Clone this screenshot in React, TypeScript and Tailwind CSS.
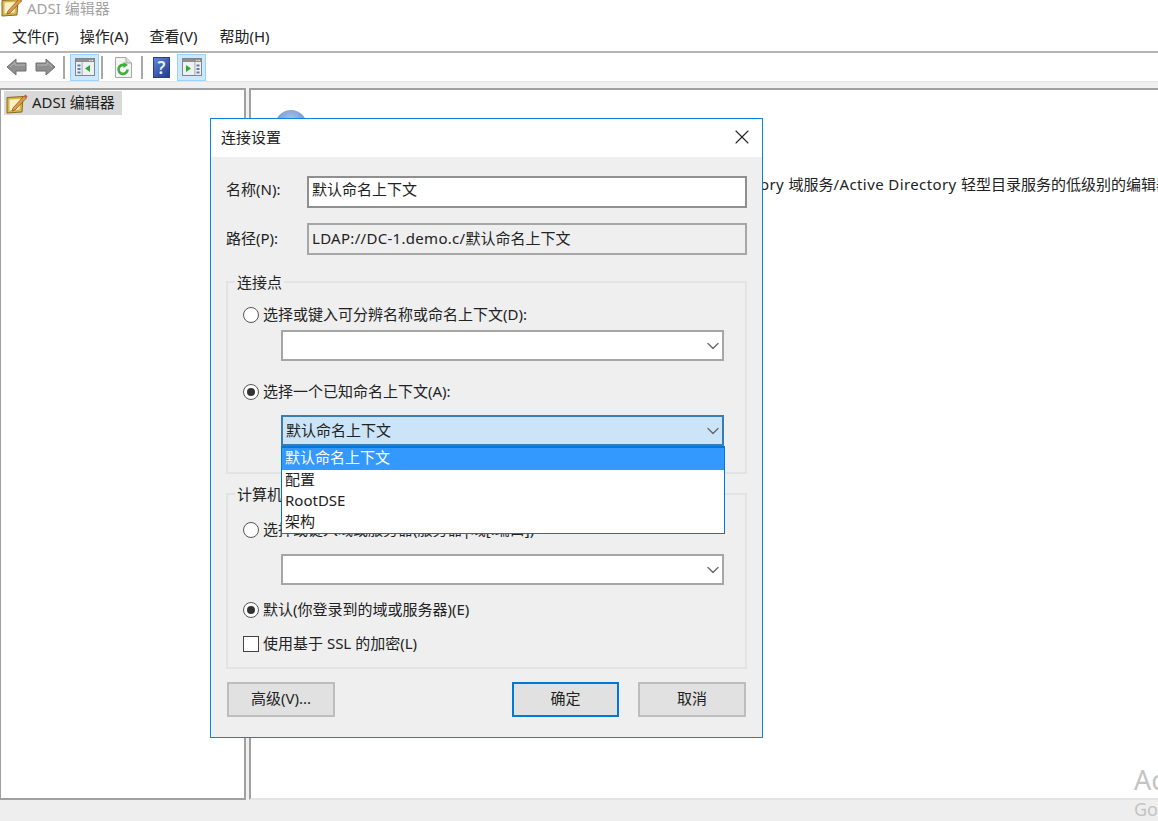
import React from 'react';
import { ChevronDown, X } from 'lucide-react';

const font = { fontFamily: '"Noto Sans", "Noto Sans CJK SC", sans-serif' };

const SnapIcon = () => (
  <svg width="22" height="22" viewBox="0 0 22 22">
    <path d="M1 5.500 L17 4.500 L16 20 L1 21 Z" fill="#d9b44a" stroke="#8a6a1c" />
    <path d="M3.500 7.500 L14.500 7 L13.500 17.500 L3.500 18.500 Z" fill="#f8f0c8" />
    <path d="M7 16 L18 4 L20.500 6 L9 18 L6 19 Z" fill="#e89a3a" stroke="#6d5a2a" strokeWidth="0.7" />
    <path d="M18 4 L19.500 2.500 L21.500 4.500 L20.500 6 Z" fill="#c9504a" />
  </svg>
);

const ArrowIcon = ({ flip }: { flip?: boolean }) => (
  <svg width="21" height="20" viewBox="0 0 21 20" className={flip ? '-scale-x-100' : ''}>
    <path d="M1 10 L10 2 V6 H20 V14 H10 V18 Z" fill="#8f8f8f" stroke="#6f6f6f" />
    <path d="M4 10 L9 5.500 V8 H19" fill="none" stroke="#b5b5b5" />
  </svg>
);

const PaneIcon = ({ right }: { right?: boolean }) => (
  <svg width="20" height="18" viewBox="0 0 20 18">
    <rect x="0.500" y="0.500" width="19" height="17" fill="#eef1f3" stroke="#858585" />
    <rect x="1" y="1" width="18" height="3" fill="#8e8e8e" />
    <rect x="14" y="2" width="1.500" height="1" fill="#e6e6e6" />
    <rect x="16.500" y="2" width="1.500" height="1" fill="#e6e6e6" />
    {right ? (
      <>
        <path d="M4 7 L9 10.500 L4 14 Z" fill="#2fa836" />
        <rect x="12.500" y="4" width="0.800" height="13" fill="#9a9a9a" />
        <rect x="14.500" y="6.500" width="3" height="2" fill="#5b7fa8" />
        <rect x="14.500" y="10" width="3" height="2" fill="#5b7fa8" />
        <rect x="14.500" y="13.500" width="3" height="2" fill="#5b7fa8" />
      </>
    ) : (
      <>
        <rect x="6.700" y="4" width="0.800" height="13" fill="#9a9a9a" />
        <rect x="2.500" y="6.500" width="3" height="2" fill="#5b7fa8" />
        <rect x="2.500" y="10" width="3" height="2" fill="#5b7fa8" />
        <rect x="2.500" y="13.500" width="3" height="2" fill="#5b7fa8" />
        <path d="M15 7 L10 10.500 L15 14 Z" fill="#2fa836" />
      </>
    )}
  </svg>
);

const RefreshIcon = () => (
  <svg width="17" height="21" viewBox="0 0 17 21">
    <path d="M0.500 0.500 H11 L16.500 6 V20.500 H0.500 Z" fill="#f4f4f4" stroke="#a8a8a8" />
    <path d="M11 0.500 V6 H16.500" fill="#dcdcdc" stroke="#a8a8a8" />
    <path d="M12.500 12.500 A4.500 4.500 0 1 1 9.500 8.200" fill="none" stroke="#3fae3a" strokeWidth="2.600" />
    <path d="M8.500 5 L13 8 L8.500 11 Z" fill="#3fae3a" />
  </svg>
);

const HelpIcon = () => (
  <div className="w-[17px] h-[21px] bg-[linear-gradient(135deg,#5f86d8,#1f3a8a)] border border-[#2a3f86] flex items-center justify-center text-[#e8eeff] text-[17px] font-semibold leading-none">
    ?
  </div>
);

const Radio = ({ checked }: { checked?: boolean }) => (
  <span className="w-[16px] h-[16px] rounded-full border-[1.500px] border-[#555] bg-white flex items-center justify-center shrink-0">
    {checked && <span className="w-[8px] h-[8px] rounded-full bg-[#333]" />}
  </span>
);

const Combo = ({ value, active }: { value?: string; active?: boolean }) => (
  <div
    className={`ml-[38px] w-[443px] h-[31px] border-2 flex items-center justify-between pl-[3px] ${
      active ? 'border-[#3a7db5] bg-[#cce4f7]' : 'border-[#a6a6a6] bg-white'
    }`}
  >
    <span>{value}</span>
    <ChevronDown size={20} strokeWidth={1.500} className="text-[#666] -mr-[1px]" />
  </div>
);

const DialogButton = ({ label, primary }: { label: string; primary?: boolean }) => (
  <button
    className={`h-[35px] bg-[#e1e1e1] ${
      primary ? 'w-[107px] border-2 border-[#0078d7]' : 'w-[108px] border-2 border-[#bdbdbd]'
    }`}
  >
    <span className="relative -top-[1px]">{label}</span>
  </button>
);

export default function App() {
  return (
    <div className="relative w-[1158px] h-[821px] overflow-hidden bg-white text-[15px] text-[#222] flex flex-col" style={font}>
      {/* Title */}
      <div className="h-[22px] flex items-start pl-[1px] shrink-0">
        <div className="-mt-[5px]">
          <SnapIcon />
        </div>
        <span className="ml-[4px] -mt-[2px] leading-[20px] text-[#a3a3a3]">ADSI 编辑器</span>
      </div>

      {/* Menu */}
      <div className="h-[29px] flex items-center pl-[12px] gap-[21px] shrink-0">
        <span>文件(F)</span>
        <span>操作(A)</span>
        <span className="mr-[1px]">查看(V)</span>
        <span>帮助(H)</span>
      </div>

      {/* Toolbar */}
      <div className="h-[30px] shrink-0 border-t-2 border-[#b4b4b4] flex items-center pl-[6px]">
        <ArrowIcon />
        <div className="ml-[8px]">
          <ArrowIcon flip />
        </div>
        <div className="ml-[7px] w-[2px] h-[23px] bg-[#a8a8a8]" />
        <div className="ml-[5px] w-[29px] h-[27px] bg-[#cce8ff] border border-[#99d1ff] flex items-center justify-center">
          <PaneIcon />
        </div>
        <div className="ml-[2px] w-[2px] h-[23px] bg-[#a8a8a8]" />
        <div className="ml-[12px]">
          <RefreshIcon />
        </div>
        <div className="ml-[9px] w-[2px] h-[23px] bg-[#a8a8a8]" />
        <div className="ml-[10px]">
          <HelpIcon />
        </div>
        <div className="ml-[7px] w-[29px] h-[27px] bg-[#cce8ff] border border-[#99d1ff] flex items-center justify-center">
          <PaneIcon right />
        </div>
      </div>

      {/* Strip under toolbar */}
      <div className="h-[7px] shrink-0 bg-[#f0f0f0] border-t border-[#e3e3e3]" />

      {/* Panes */}
      <div className="h-[712px] shrink-0 flex bg-[#f0f0f0]">
        <div className="w-[246px] border-2 border-l-[1px] border-[#a0a0a0] bg-white pt-[1px] pl-[3px]">
          <div className="w-[118px] h-[24px] bg-[#d9d9d9] flex items-center pl-[2px] gap-[4px]">
            <SnapIcon />
            <span className="whitespace-nowrap relative -top-[1px]">ADSI 编辑器</span>
          </div>
        </div>
        <div className="ml-[3px] flex-1 min-w-0 border-t-2 border-l-2 border-[#a0a0a0] border-b-2 border-b-[#e4e4e4] bg-white relative overflow-hidden">
          <div className="mt-[20px] ml-[24px] w-[32px] h-[32px] rounded-full bg-[radial-gradient(circle_at_50%_30%,#a9c5ec,#3f6fc0)]" />
          <p className="mt-[32px] ml-[416px] leading-[20px] whitespace-nowrap">
            <span className="tracking-[0.4px]">Active Directory </span>域服务<span className="tracking-[0.4px]">/Active Directory </span>轻型目录服务的低级别的编辑器
          </p>
        </div>
      </div>

      {/* Bottom strip */}
      <div className="flex-1 bg-[#eeeeee]" />

      {/* Windows watermark */}
      <div className="absolute left-[1134px] top-[762px] whitespace-nowrap text-[#c4c4c4] text-[27px] leading-[36px]">Activate Windows</div>
      <div className="absolute left-[1134px] top-[797px] whitespace-nowrap text-[#c4c4c4] text-[18px] leading-[24px]">Go to Settings</div>

      {/* Dialog */}
      <div className="absolute left-[210px] top-[118px] w-[553px] h-[620px] border border-[#0a84e0] bg-[#efefef] flex flex-col">
        <div className="h-[38px] bg-white flex items-center justify-between pl-[10px] pr-[8px] shrink-0">
          <span className="relative -top-[1px]">连接设置</span>
          <X size={24} strokeWidth={1.100} className="text-[#222] relative -top-[1px]" />
        </div>
        <div className="flex-1 pl-[15px] pr-[15px] pt-[19px] relative">
          <div className="flex items-center h-[32px]">
            <span className="w-[81px] relative -top-[3px]">名称(N):</span>
            <div className="w-[440px] h-[32px] border-2 border-[#8f8f8f] bg-white flex items-center pl-[3px]">
              <span className="relative -top-[3px]">默认命名上下文</span>
            </div>
          </div>
          <div className="flex items-center h-[32px] mt-[15px]">
            <span className="w-[81px] relative -top-[1px]">路径(P):</span>
            <div className="w-[440px] h-[32px] border-2 border-[#a6a6a6] bg-[#efefef] flex items-center pl-[3px]">
              <span className="relative -top-[1px]">
                <span className="tracking-[0.3px]">LDAP://DC-1.demo.c/</span>默认命名上下文
              </span>
            </div>
          </div>

          {/* 连接点 */}
          <fieldset className="mt-[17px] w-[521px] h-[202px] border-2 border-[#e3e3e3] pl-[15px] -mb-[1px]">
            <legend className="-ml-[8px] px-[2px] leading-[20px]">连接点</legend>
            <div className="flex items-center gap-[4px] h-[20px] mt-[13px]">
              <Radio />
              <span className="relative -top-[1px]">选择或键入可分辨名称或命名上下文(D):</span>
            </div>
            <div className="mt-[5px]">
              <Combo />
            </div>
            <div className="flex items-center gap-[4px] h-[20px] mt-[21px]">
              <Radio checked />
              <span className="relative -top-[1px]">选择一个已知命名上下文(A):</span>
            </div>
            <div className="mt-[13px]">
              <Combo value="默认命名上下文" active />
            </div>
          </fieldset>

          {/* 计算机 */}
          <fieldset className="mt-[11px] w-[521px] h-[185px] border-2 border-[#e3e3e3] pl-[15px]">
            <legend className="-ml-[8px] px-[2px] leading-[20px]">计算机</legend>
            <div className="flex items-center gap-[4px] h-[20px] mt-[16px]">
              <Radio />
              <span className="relative -top-[1px]">选择或键入域或服务器(服务器|域[:端口])</span>
            </div>
            <div className="mt-[14px]">
              <Combo />
            </div>
            <div className="flex items-center gap-[4px] h-[20px] mt-[15px]">
              <Radio checked />
              <span className="relative -top-[1px]">默认(你登录到的域或服务器)(E)</span>
            </div>
            <div className="flex items-center gap-[4px] h-[20px] mt-[14px]">
              <span className="w-[16px] h-[16px] border-[1.500px] border-[#444] bg-white shrink-0" />
              <span className="relative -top-[1px]">使用基于 SSL 的加密(L)</span>
            </div>
          </fieldset>

          <div className="flex mt-[13px] pl-[1px]">
            <DialogButton label="高级(V)..." />
            <div className="ml-[177px]">
              <DialogButton label="确定" primary />
            </div>
            <div className="ml-[19px]">
              <DialogButton label="取消" />
            </div>
          </div>

          {/* Open dropdown list */}
          <div className="absolute left-[70px] top-[289px] w-[444px] h-[88px] border border-[#0078d7] border-t-2 bg-white leading-[21.500px] pl-[3px]">
            <div className="-ml-[3px] pl-[3px] bg-[#3399ff] text-white">
              <span className="relative -top-[1px]">默认命名上下文</span>
            </div>
            <div className="relative -top-[1px]">配置</div>
            <div className="relative -top-[1px]">RootDSE</div>
            <div className="relative -top-[2px]">架构</div>
          </div>
        </div>
      </div>
    </div>
  );
}
